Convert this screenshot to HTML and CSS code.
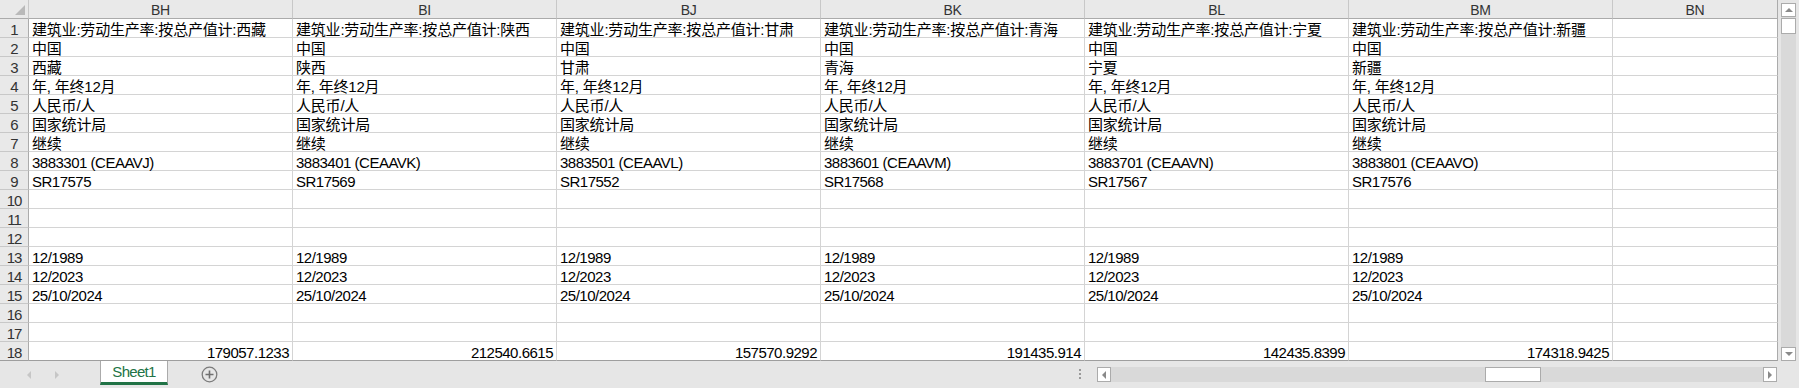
FILE: index.html
```html
<!DOCTYPE html>
<html lang="zh-CN">
<head>
    <meta charset="UTF-8">
    <title>Sheet1</title>
    <link rel="stylesheet" href="styles.css">
</head>
<body>
    <div class="excel">
        <div class="main">
            <div class="grid" id="grid"></div>
            <div class="vscroll">
                <div class="vtrack">
                    <div class="sbtn"><span class="arr up"></span></div>
                    <div class="vthumb"></div>
                    <div class="vfill"></div>
                    <div class="sbtn"><span class="arr down"></span></div>
                </div>
            </div>
        </div>
        <div class="bottom">
            <div class="nav">
                <span class="arr left nav-arr"></span>
                <span class="arr right nav-arr"></span>
            </div>
            <div class="tab">Sheet1</div>
            <div class="add">
                <svg width="17" height="17" viewBox="0 0 17 17">
                    <circle cx="8.5" cy="8.5" r="7.3" fill="none" stroke="#7b7b7b" stroke-width="1.3"/>
                    <path d="M8.5 4.5v8M4.5 8.5h8" stroke="#6f6f6f" stroke-width="1.6"/>
                </svg>
            </div>
            <div class="spacer"></div>
            <div class="dots"><i></i><i></i><i></i></div>
            <div class="hscroll">
                <div class="sbtn"><span class="arr left"></span></div>
                <div class="htrack"><div class="hthumb"></div></div>
                <div class="sbtn"><span class="arr right"></span></div>
            </div>
        </div>
    </div>

    <script>
        // BH..BM: region, series id, code, SR number, value in row 18
        const cols = [
            ['BH', '西藏', '3883301', 'CEAAVJ', 'SR17575', '179057.1233'],
            ['BI', '陕西', '3883401', 'CEAAVK', 'SR17569', '212540.6615'],
            ['BJ', '甘肃', '3883501', 'CEAAVL', 'SR17552', '157570.9292'],
            ['BK', '青海', '3883601', 'CEAAVM', 'SR17568', '191435.914'],
            ['BL', '宁夏', '3883701', 'CEAAVN', 'SR17567', '142435.8399'],
            ['BM', '新疆', '3883801', 'CEAAVO', 'SR17576', '174318.9425']
        ];

        function column(c) {
            return [
                '建筑业:劳动生产率:按总产值计:' + c[1],
                '中国', c[1], '年, 年终12月', '人民币/人', '国家统计局', '继续',
                c[2] + ' (' + c[3] + ')', c[4], '', '', '',
                '12/1989', '12/2023', '25/10/2024', '', '', c[5]
            ];
        }

        const grid = document.getElementById('grid');
        const data = cols.map(column);
        let html = '<div class="corner"><div class="tri"></div></div>';
        cols.forEach(c => { html += '<div class="colhead">' + c[0] + '</div>'; });
        html += '<div class="colhead last">BN</div>';

        for (let r = 0; r < 18; r++) {
            const bottom = r === 17 ? ' bot' : '';
            const kind = r === 17 ? ' num' : (r < 7 ? ' zh' : '');
            html += '<div class="rowhead' + bottom + '">' + (r + 1) + '</div>';
            data.forEach(col => {
                html += '<div class="cell' + kind + bottom + '">' + col[r] + '</div>';
            });
            html += '<div class="cell last' + bottom + '"></div>';
        }
        grid.innerHTML = html;
    </script>
</body>
</html>
```

FILE: styles.css
```css
body {
    margin: 0;
    background: #e6e6e6;
    font-family: "Liberation Sans", "Noto Sans CJK SC", sans-serif;
}
.excel {
    width: 1799px;
    height: 388px;
    display: flex;
    flex-direction: column;
    overflow: hidden;
}
.main {
    display: flex;
    height: 361px;
}
.grid {
    display: grid;
    grid-template-columns: 29px repeat(6, 264px) 165px;
    grid-auto-rows: 19px;
    background: #fff;
}
.grid > div {
    box-sizing: border-box;
    border-right: 1px solid #d4d4d4;
    border-bottom: 1px solid #d4d4d4;
    white-space: nowrap;
}
.corner {
    background: #e9e9e9;
    display: flex;
    justify-content: flex-end;
    align-items: flex-end;
    padding: 0 3px 3px 0;
}
.grid > .corner,
.grid > .colhead {
    border-right-color: #c8c8c8;
    border-bottom-color: #ababab;
}
.tri {
    width: 10px;
    height: 10px;
    background: #b9b9b9;
    clip-path: polygon(100% 0, 100% 100%, 0 100%);
}
.colhead {
    background: #e9e9e9;
    color: #333;
    font-size: 14px;
    letter-spacing: -0.3px;
    line-height: 18px;
    padding-top: 1px;
    text-align: center;
}
.rowhead {
    background: #e9e9e9;
    color: #333;
    font-size: 15px;
    letter-spacing: -1px;
    line-height: 18px;
    padding-top: 2px;
    text-align: center;
}
.grid > .rowhead {
    border-right-color: #ababab;
    border-bottom-color: #c8c8c8;
}
.cell {
    color: #000;
    font-size: 15px;
    letter-spacing: -0.5px;
    line-height: 18px;
    padding: 2px 0 0 3px;
}
.cell.zh {
    letter-spacing: -0.2px;
}
.cell.num {
    text-align: right;
    padding-right: 3px;
}
.grid > .last {
    border-right-color: #ababab;
}
.grid > .bot {
    border-bottom-color: #9e9e9e;
}
.vscroll {
    width: 21px;
    padding: 3px 3px 0 3px;
    box-sizing: border-box;
}
.vtrack {
    height: 358px;
    background: #d9d9d9;
    display: flex;
    flex-direction: column;
}
.sbtn {
    width: 15px;
    height: 14px;
    box-sizing: border-box;
    background: #fff;
    border: 1px solid #ababab;
    display: flex;
    align-items: center;
    justify-content: center;
}
.vthumb {
    height: 16px;
    margin-top: 1px;
    box-sizing: border-box;
    background: #fff;
    border: 1px solid #ababab;
}
.vfill {
    flex: 1;
}
.arr {
    width: 0;
    height: 0;
    border: 4px solid transparent;
}
.arr.up {
    border-bottom-color: #8a8a8a;
    border-top-width: 0;
}
.arr.down {
    border-top-color: #8a8a8a;
    border-bottom-width: 0;
}
.arr.left {
    border-right-color: #8a8a8a;
    border-left-width: 0;
}
.arr.right {
    border-left-color: #8a8a8a;
    border-right-width: 0;
}
.bottom {
    height: 27px;
    display: flex;
    align-items: flex-start;
    padding-right: 22px;
}
.nav {
    width: 100px;
    height: 27px;
    display: flex;
    align-items: center;
    padding-left: 27px;
    gap: 24px;
    box-sizing: border-box;
}
.nav-arr {
    border-width: 4px;
}
.nav-arr.left {
    border-right-color: #c6c6c6;
}
.nav-arr.right {
    border-left-color: #c6c6c6;
}
.tab {
    width: 68px;
    height: 24px;
    box-sizing: border-box;
    background: #fff;
    border-left: 1px solid #ababab;
    border-right: 1px solid #ababab;
    border-bottom: 3px solid #217346;
    color: #217346;
    font-size: 15px;
    letter-spacing: -0.7px;
    line-height: 21px;
    text-align: center;
}
.add {
    margin: 5px 0 0 33px;
    height: 17px;
}
.spacer {
    flex: 1;
}
.dots {
    margin: 8px 16px 0 0;
    display: flex;
    flex-direction: column;
    gap: 2px;
}
.dots i {
    width: 2px;
    height: 2px;
    background: #9a9a9a;
}
.hscroll {
    width: 680px;
    margin-top: 6px;
    display: flex;
    height: 15px;
}
.hscroll .sbtn {
    width: 14px;
    height: 15px;
}
.htrack {
    flex: 1;
    background: #d9d9d9;
    display: flex;
}
.hthumb {
    width: 56px;
    margin-left: 374px;
    box-sizing: border-box;
    background: #fff;
    border: 1px solid #ababab;
}
```
